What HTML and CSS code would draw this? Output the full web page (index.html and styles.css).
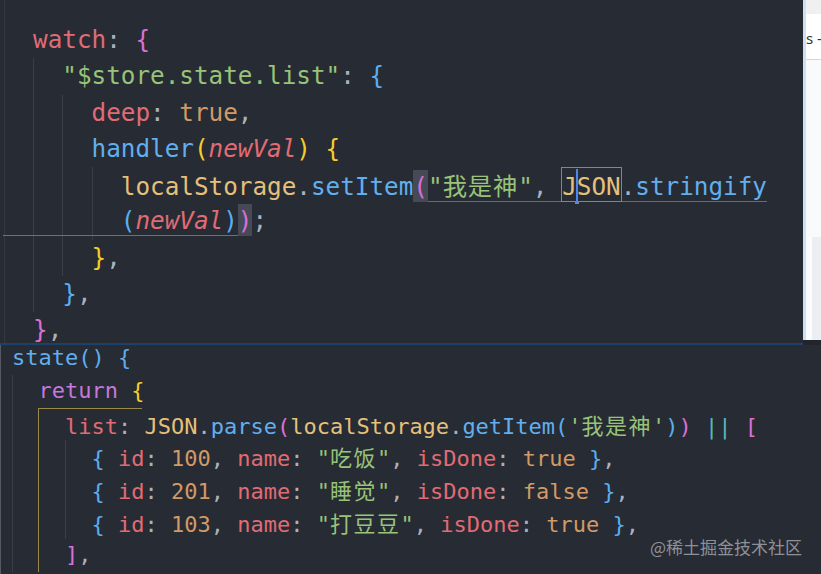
FILE: index.html
```html
<!DOCTYPE html>
<html lang="zh">
<head>
<meta charset="utf-8">
<title>watch / state</title>
<link rel="stylesheet" href="styles.css">
</head>
<body>
<div class="toprow">
  <div class="code top">
    <div class="ln"><span class="r">watch</span><span class="p">: </span><span class="k1">{</span></div>
    <div class="blk">
      <div class="ln"><span class="g">"$store.state.list"</span><span class="p">: </span><span class="k2">{</span></div>
      <div class="blk">
        <div class="ln"><span class="r">deep</span><span class="p">: </span><span class="o">true</span><span class="p">,</span></div>
        <div class="ln"><span class="bl">handler</span><span class="k3">(</span><span class="r it">newVal</span><span class="k3">)</span> <span class="k3">{</span></div>
        <div class="blk">
          <div class="ln"><span class="y">localStorage</span><span class="p">.</span><span class="bl">setItem</span><span class="pg1"><span class="bm k1">(</span><span class="g">"<span class="cjk">我是神</span>"</span><span class="p">, </span><span class="word"><span class="y">J</span><span class="cur"></span><span class="y">SON</span></span><span class="p">.</span><span class="bl">stringify</span></span></div>
          <div class="ln"><span class="pg2"><span class="k2">(</span><span class="r it">newVal</span><span class="k2">)</span><span class="bm k1">)</span></span><span class="p">;</span></div>
        </div>
        <div class="ln"><span class="k3">}</span><span class="p">,</span></div>
      </div>
      <div class="ln"><span class="k2">}</span><span class="p">,</span></div>
    </div>
    <div class="ln"><span class="k1">}</span><span class="p">,</span></div>
  </div>
  <div class="strip">
    <div class="strip-head"></div>
    <div class="strip-tab">s –</div>
    <div class="strip-body"></div>
    <div class="strip-foot"></div>
  </div>
</div>
<div class="code bottom">
  <div class="ln first"><span class="bl">state</span><span class="k2">()</span> <span class="k2">{</span></div>
  <div class="blk">
    <div class="ln"><span class="pu">return</span> <span class="k3">{</span></div>
    <div class="blk gold">
      <div class="ln"><span class="r">list</span><span class="p">: </span><span class="y">JSON</span><span class="p">.</span><span class="bl">parse</span><span class="k1">(</span><span class="y">localStorage</span><span class="p">.</span><span class="bl">getItem</span><span class="k2">(</span><span class="g">'<span class="cjk">我是神</span>'</span><span class="k2">)</span><span class="k1">)</span> <span class="cy">||</span> <span class="k1">[</span></div>
      <div class="blk">
        <div class="ln"><span class="k2">{</span> <span class="r">id</span><span class="p">: </span><span class="o">100</span><span class="p">, </span><span class="r">name</span><span class="p">: </span><span class="g">"<span class="cjk">吃饭</span>"</span><span class="p">, </span><span class="r">isDone</span><span class="p">: </span><span class="o">true</span> <span class="k2">}</span><span class="p">,</span></div>
        <div class="ln"><span class="k2">{</span> <span class="r">id</span><span class="p">: </span><span class="o">201</span><span class="p">, </span><span class="r">name</span><span class="p">: </span><span class="g">"<span class="cjk">睡觉</span>"</span><span class="p">, </span><span class="r">isDone</span><span class="p">: </span><span class="o">false</span> <span class="k2">}</span><span class="p">,</span></div>
        <div class="ln"><span class="k2">{</span> <span class="r">id</span><span class="p">: </span><span class="o">103</span><span class="p">, </span><span class="r">name</span><span class="p">: </span><span class="g">"<span class="cjk">打豆豆</span>"</span><span class="p">, </span><span class="r">isDone</span><span class="p">: </span><span class="o">true</span> <span class="k2">}</span><span class="p">,</span></div>
      </div>
      <div class="ln"><span class="k1">]</span><span class="p">,</span></div>
    </div>
  </div>
  <div class="watermark">@稀土掘金技术社区</div>
</div>
</body>
</html>
```

FILE: styles.css
```css
* { box-sizing: border-box; }
html, body { margin: 0; padding: 0; }
body {
  width: 821px;
  height: 574px;
  overflow: hidden;
  background: #22252c;
}

.toprow {
  display: flex;
  height: 345px;
}

.code {
  font-family: "DejaVu Sans Mono", "Noto Sans CJK SC", monospace;
  color: #abb2bf;
  background: #272b33;
}

.ln { white-space: pre; }

.top {
  width: 803px;
  height: 345px;
  flex: none;
  font-size: 24.3px;
  line-height: 36.25px;
  padding: 22px 0 0 33px;
  border-bottom: 2px solid #1f4169;
  background-color: #272b33;
  background-image: linear-gradient(to right, transparent 4px, #343841 4px, #343841 5px, transparent 5px);
  overflow: hidden;
}

.top .ln { height: 36.25px; }
.bottom .ln { height: 32.8px; }

.blk {
  border-left: 1px solid #3a3e47;
  padding-left: calc(2ch - 1px);
}

.cjk {
  font-family: "Noto Sans CJK SC", sans-serif;
  letter-spacing: 0.9px;
}

/* tokens */
.r { color: #e06c75; }
.g { color: #98c379; }
.o { color: #d19a66; }
.y { color: #e5c07b; }
.bl { color: #61afef; }
.pu { color: #c678dd; }
.cy { color: #56b6c2; }
.p { color: #abb2bf; }
.it { font-style: italic; }
.k1 { color: #da70d6; }
.k2 { color: #5aaef0; }
.k3 { color: #f5cd2a; }

/* editor decorations */
.bm {
  background: #454a56;
  padding: 2px 0 1px;
}
.pg1 {
  border-bottom: 1px solid #9c4d88;
}
.pg2 {
  margin-left: -118px;
  padding-left: 118px;
  border-bottom: 1px solid #a4508f;
}
.word {
  outline: 1px solid #80858e;
  padding: 4px 0 0;
}
.cur {
  display: inline-block;
  width: 2px;
  height: 34px;
  margin: 0 -1px;
  vertical-align: -8px;
  background: #4d86f0;
}

/* right strip (another window behind) */
.strip {
  width: 18px;
  height: 340px;
  flex: none;
  display: flex;
  flex-direction: column;
  border-left: 3px solid #d0e0f4;
  background: #f8f9fb;
  overflow: hidden;
}
.strip-head {
  height: 14px;
  background: #f0f0f0;
}
.strip-tab {
  height: 46px;
  background: #ffffff;
  border-bottom: 1px solid #d6d6d6;
  font-family: "Noto Sans", "Liberation Sans", sans-serif;
  font-size: 15px;
  line-height: 48px;
  color: #333333;
  white-space: nowrap;
}
.strip-body {
  flex: 1;
  background: #f9fafc;
}
.strip-foot {
  height: 103px;
  background: linear-gradient(to right, #fbfcfe 0, #fbfcfe 6px, #eceef1 6px);
}

/* bottom panel */
.bottom {
  position: relative;
  height: 229px;
  font-size: 22px;
  line-height: 32.8px;
  padding-left: 11px;
  border-left: 1px solid #555a63;
  overflow: hidden;
}
.bottom .ln.first { margin-top: -3px; }
.bottom .cjk { letter-spacing: 1.5px; }
.blk.gold {
  border-left-color: #9b884d;
}
.blk.gold::before {
  content: "";
  display: block;
  height: 0;
  width: 104px;
  margin-left: -2ch;
  margin-top: 0;
  margin-bottom: -1px;
  border-top: 1px solid #9b884d;
}

.watermark {
  position: absolute;
  right: 19px;
  bottom: 17px;
  font-family: "Noto Sans CJK SC", sans-serif;
  font-size: 17px;
  line-height: 20px;
  color: #8e9198;
  white-space: nowrap;
}
```
